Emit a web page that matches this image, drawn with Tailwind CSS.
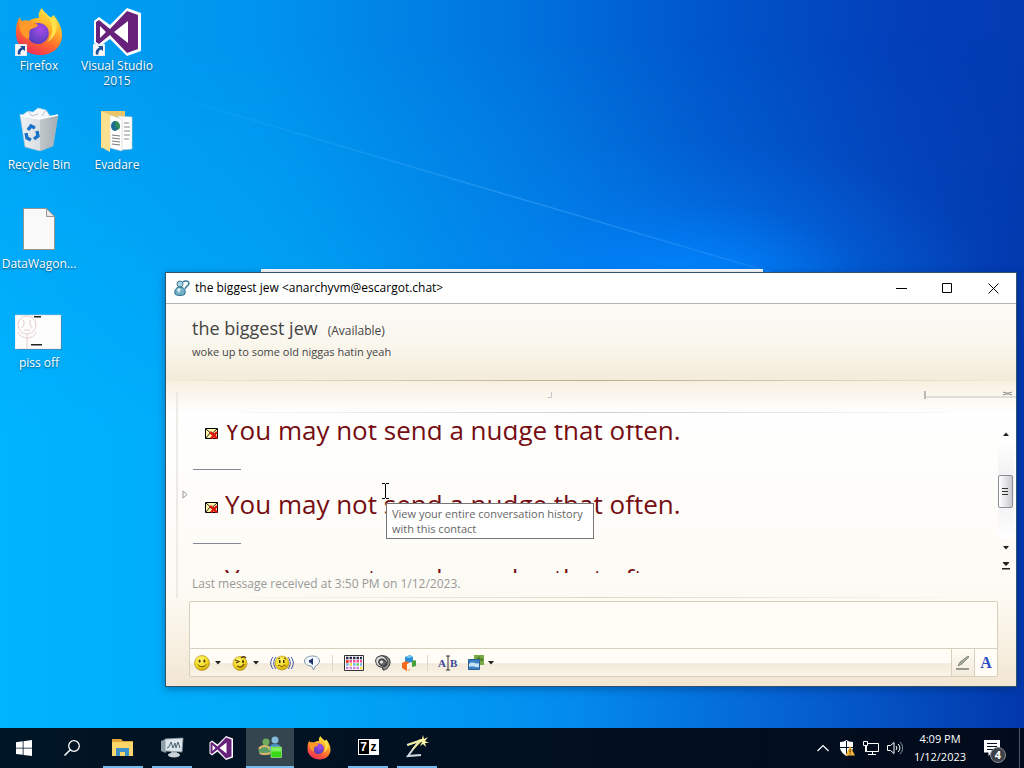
<!DOCTYPE html>
<html lang="en">
<head>
    <meta charset="UTF-8">
    <meta name="viewport" content="width=device-width, initial-scale=1.0">
    <script src="https://cdn.jsdelivr.net/npm/@tailwindcss/browser@4"></script>
    <title>Desktop</title>
</head>
<body class="h-screen overflow-hidden flex flex-col text-xs font-['Open_Sans','Noto_Sans',sans-serif]">

    <!-- Shared symbols -->
    <svg class="absolute size-0" aria-hidden="true">
        <defs>
            <linearGradient id="ff-body" x1=".8" y1="0" x2=".3" y2="1">
                <stop offset="0" stop-color="#fff04a"/>
                <stop offset=".35" stop-color="#ffb52b"/>
                <stop offset=".65" stop-color="#ff6a2c"/>
                <stop offset="1" stop-color="#f0295c"/>
            </linearGradient>
            <radialGradient id="ff-globe" cx=".6" cy=".3" r=".8">
                <stop offset="0" stop-color="#a64be8"/>
                <stop offset="1" stop-color="#4c3bb5"/>
            </radialGradient>
            <radialGradient id="smile" cx=".4" cy=".3" r=".8">
                <stop offset="0" stop-color="#fff873"/>
                <stop offset=".6" stop-color="#f2d51c"/>
                <stop offset="1" stop-color="#b98d0a"/>
            </radialGradient>
            <linearGradient id="bin" x1="0" x2="1">
                <stop offset="0" stop-color="#eef1f3"/>
                <stop offset=".55" stop-color="#d9dee2"/>
                <stop offset="1" stop-color="#a9b2b9"/>
            </linearGradient>
            <symbol id="firefox" viewBox="0 0 48 48">
                <path fill="url(#ff-body)" d="M2 15c1-3 2-5 3-6 0 2 1 3 2 4 2-1 5-1 7 0 4-3 7-3 10-3-1-4 0-7 3-10 1 4 5 5 7 9 2 0 4 0 4-2 5 5 9 12 9 20 0 12-9 20-22 20S1 38 1 26c0-4 0-8 1-11z"/>
                <path fill="url(#ff-globe)" d="M16 18c4-5 14-4 17 3 3 8-3 15-10 15-6 0-10-4-10-10 0-3 1-6 3-8z"/>
                <path fill="#ff9a2a" d="M5 12c3 2 6 1 9 2 2 1 6 1 9 3-1 3-6 3-8 5-2 3 1 7-2 9-7-3-10-11-8-19z"/>
                <path fill="#ffe24a" d="M27 1c1 4 6 6 8 11 4 8 2 17-3 22 9-5 13-15 7-27l-2 4c-3-4-8-5-10-10z"/>
            </symbol>
            <symbol id="vs" viewBox="0 0 48 48">
                <path fill="#fff" d="M1 13 6 9l11 8L34 0l14 5v38l-14 5-17-17-11 8-5-4z"/>
                <path fill="#68217a" fill-rule="evenodd" d="m3 14 3-2 11 9L34 3l11 4v34l-11 4-17-18-11 9-3-2zm4 4v12l6-6zm14 6 14 11V13z"/>
            </symbol>
            <symbol id="shortcut" viewBox="0 0 12 12">
                <path fill="#f7f7f7" stroke="#b9c4cc" stroke-width=".5" d="M0 0h12v12H0z"/>
                <path fill="#1f4f99" d="M5 2h5v5L8 5.500C6 6.500 5 8 5.500 10.500H3C2 7 4 4.500 6.500 3.800z"/>
            </symbol>
            <symbol id="smiley" viewBox="0 0 16 16">
                <circle cx="8" cy="8" r="7.500" fill="url(#smile)" stroke="#b08b14" stroke-width=".6"/>
                <ellipse cx="5.600" cy="6" rx="1" ry="1.600" fill="#3b2f05"/>
                <ellipse cx="10.400" cy="6" rx="1" ry="1.600" fill="#3b2f05"/>
                <path d="M4 9.500c1.500 3 6.500 3 8 0" fill="none" stroke="#5c4508"/>
            </symbol>
            <symbol id="caret" viewBox="0 0 6 4"><path fill="#222" d="M0 0h6L3 3.500z"/></symbol>
            <symbol id="mail-x" viewBox="0 0 13 11">
                <path fill="#fff7a8" stroke="#000" d="M.5.500h12v10H.5z"/>
                <path d="m1 1 5.500 5L12 1M1 10l4-5M12 10 8 5" fill="none" stroke="#222"/>
                <path d="m5 4 7 6.500M12 4 6 10.500" stroke="#e3150f" stroke-width="2.400"/>
            </symbol>
        </defs>
    </svg>

    <main class="relative flex-1 min-h-0 overflow-hidden bg-[#00a8f8]">
        <!-- Wallpaper -->
        <svg class="absolute inset-0 size-full" viewBox="0 0 1024 728" preserveAspectRatio="none" aria-hidden="true">
            <defs>
                <linearGradient id="sky" x1="0" x2="1">
                    <stop offset="0" stop-color="#00a2f4"/>
                    <stop offset=".25" stop-color="#0094ee"/>
                    <stop offset=".5" stop-color="#0074de"/>
                    <stop offset=".7" stop-color="#0054ca"/>
                    <stop offset=".88" stop-color="#033fb9"/>
                    <stop offset="1" stop-color="#033bb2"/>
                </linearGradient>
                <linearGradient id="floor" x1="0" x2="1">
                    <stop offset="0" stop-color="#00b4ff"/>
                    <stop offset=".3" stop-color="#00a8f8"/>
                    <stop offset=".55" stop-color="#038cee"/>
                    <stop offset=".78" stop-color="#0560d0"/>
                    <stop offset="1" stop-color="#0238ac"/>
                </linearGradient>
                <linearGradient id="fade" x1="0" x2="0" y1="0" y2="1">
                    <stop offset=".05" stop-color="#000"/>
                    <stop offset=".6" stop-color="#fff"/>
                </linearGradient>
                <mask id="low"><path fill="url(#fade)" d="M0 0h1024v728H0z"/></mask>
                <radialGradient id="glow">
                    <stop offset="0" stop-color="#0088ff"/>
                    <stop offset=".25" stop-color="#0084ff" stop-opacity=".7"/>
                    <stop offset=".6" stop-color="#0080ff" stop-opacity=".2"/>
                    <stop offset="1" stop-color="#0080ff" stop-opacity="0"/>
                </radialGradient>
                <linearGradient id="ray" x1="0" x2="1">
                    <stop offset="0" stop-color="#5cc4ff" stop-opacity="0"/>
                    <stop offset=".6" stop-color="#4fb2ff" stop-opacity=".4"/>
                    <stop offset="1" stop-color="#3c9cff" stop-opacity=".3"/>
                </linearGradient>
            </defs>
            <path fill="url(#sky)" d="M0 0h1024v728H0z"/>
            <path fill="url(#floor)" mask="url(#low)" d="M0 0h1024v728H0z"/>
            <ellipse cx="690" cy="290" rx="300" ry="150" fill="url(#glow)"/>
            <path d="M150 90 770 272" stroke="url(#ray)" stroke-width="1.500"/>
        </svg>

        <!-- Desktop icons -->
        <div class="absolute top-2 left-0 grid grid-flow-col grid-rows-[repeat(4,99px)] auto-cols-[78px] text-white text-center leading-[15px] [text-shadow:0_1px_2px_#0008]">
            <a href="#" class="flex flex-col items-center gap-[2px]">
                <span class="relative">
                    <svg class="size-12"><use href="#firefox"/></svg>
                    <svg class="absolute left-0 bottom-0 size-3"><use href="#shortcut"/></svg>
                </span>
                Firefox
            </a>
            <a href="#" class="flex flex-col items-center gap-[2px]">
                <svg class="size-12" viewBox="0 0 48 48" aria-hidden="true">
                    <path fill="#f4f8fa" stroke="#c3ccd2" stroke-width=".5" d="m6 9 7-5 5 1 5-4 8 2 4 6 3 1-14 5z"/>
                    <path d="m13 4 4 5 6-2m8-4-4 6" fill="none" stroke="#b9c4cb"/>
                    <path fill="url(#bin)" stroke="#b7c0c6" stroke-width=".6" d="m5 8 19 4 19-4-5 31-13 5-15-4z"/>
                    <path fill="#9aa4ab" fill-opacity=".4" d="m25 12 18-4-5 31-13 5z"/>
                    <path d="m5 8 19 4 19-4" fill="none" stroke="#fff" stroke-width="1.500"/>
                    <g fill="none" stroke="#1a73c7" stroke-width="3.400">
                        <path d="m13 23 3-4 4 2"/>
                        <path d="m22 24 1 5-4 3"/>
                        <path d="m11 26 1 5 4 2"/>
                    </g>
                </svg>
                <span class="whitespace-nowrap">Recycle Bin</span>
            </a>
            <a href="#" class="flex flex-col items-center gap-[2px]">
                <svg class="size-12" viewBox="0 0 48 48" aria-hidden="true">
                    <path fill="#f9f9f9" stroke="#99958f" d="M8.500 2.500h23l8 8v33h-31z"/>
                    <path fill="#e8e8e8" stroke="#99958f" d="M31.500 2.500v8h8z"/>
                </svg>
                <span class="whitespace-nowrap">DataWagon...</span>
            </a>
            <a href="#" class="flex flex-col items-center gap-[2px]">
                <svg class="size-12" viewBox="0 0 48 48" aria-hidden="true">
                    <path fill="#0a4f80" fill-opacity=".5" d="M2 11h45v34H2z"/>
                    <path fill="#fdfdfd" stroke="#c9c9c9" stroke-width=".5" d="M0 10h46v34H0z"/>
                    <g fill="none" stroke="#dfc2be" stroke-width=".8">
                        <circle cx="12" cy="20" r="9"/>
                        <path d="M12 29v15M3 27c3 8 15 8 18 0M8 15c2 3 1 5-1 8M15 15c-1 4 1 5 2 8M9 25h6"/>
                    </g>
                    <path fill="#222" d="M19 11h7v1.500h-7zM16 39h11v1.500H16z"/>
                </svg>
                <span class="whitespace-nowrap">piss off</span>
            </a>
            <a href="#" class="flex flex-col items-center gap-[2px]">
                <span class="relative">
                    <svg class="size-12"><use href="#vs"/></svg>
                    <svg class="absolute left-0 bottom-0 size-3"><use href="#shortcut"/></svg>
                </span>
                <span>Visual Studio 2015</span>
            </a>
            <a href="#" class="flex flex-col items-center gap-[2px]">
                <svg class="size-12" viewBox="0 0 48 48" aria-hidden="true">
                    <path fill="#e9c667" d="M8 4h24v37H8z"/>
                    <path fill="#fff" stroke="#cfcfcf" stroke-width=".6" d="m25 9 14 1v32l-12 1z"/>
                    <path d="M31 16h5M31 20h6M31 24h6M31 28h6M31 32h5" stroke="#8a8a8a"/>
                    <path fill="#fff" stroke="#cfcfcf" stroke-width=".6" d="m17 8 12 4v32l-12-3z"/>
                    <ellipse cx="22" cy="19" rx="4" ry="5" fill="#1d6d92"/>
                    <path fill="#2f8a5c" d="M22 19v-5a5 5 0 0 1 3 9z"/>
                    <path d="m19 28 8 1M19 31l8 1M19 34l8 1M19 37l8 1" stroke="#777"/>
                    <path fill="#fbe08f" d="m8 4 9 4v37l-9-5z"/>
                </svg>
                Evadare
            </a>
        </div>

        <!-- Edge of the window behind -->
        <div class="absolute left-[261px] top-[269px] w-[502px] h-20 bg-white"></div>

        <!-- Conversation window -->
        <section class="absolute left-[165px] right-[7px] top-[272px] flex flex-col border border-[#31536e] bg-[#fdfbf3] shadow-[0_2px_8px_#00205066]">
            <header class="flex items-center h-[31px] pl-2 bg-white border-b border-[#b5b5b5] text-black">
                <svg class="size-4" viewBox="0 0 16 16" aria-hidden="true">
                    <circle cx="6" cy="4" r="3" fill="#a8d4e4" stroke="#3c7d99"/>
                    <path fill="#71b0c8" stroke="#2f6f8c" d="M1 14c-1-5 2-7 5-7s6 2 5 7c-2 2-8 2-10 0z"/>
                    <path fill="#d7eef5" d="M3 10c1-2 3-2 4-1L5 13z"/>
                    <path d="M9 2c2-2 6-1 6 1 0 3-3 3-4 6" fill="none" stroke="#3c7d99" stroke-width="1.500"/>
                </svg>
                <h1 class="flex-1 pl-[5px]">the biggest jew &lt;anarchyvm@escargot.chat&gt;</h1>
                <button class="w-[46px] h-full grid place-items-center" aria-label="Minimize">
                    <svg class="w-[11px] h-[11px]" viewBox="0 0 11 11"><path d="M0 5.500h11" stroke="#000"/></svg>
                </button>
                <button class="w-[46px] h-full grid place-items-center" aria-label="Maximize">
                    <svg class="w-[11px] h-[11px]" viewBox="0 0 11 11"><path d="M.5.500h9v9h-9z" fill="none" stroke="#000"/></svg>
                </button>
                <button class="w-[46px] h-full grid place-items-center" aria-label="Close">
                    <svg class="w-[11px] h-[11px]" viewBox="0 0 11 11"><path d="m.5.500 10 10m0-10-10 10" stroke="#000"/></svg>
                </button>
            </header>

            <!-- Contact -->
            <div class="h-[76px] pl-[26px] pt-[11px] bg-linear-to-b from-[#fbfaf6] via-[#faf7ee] to-[#f3ecd9] text-[#444]">
                <p class="flex items-baseline gap-[10px] leading-[26px]">
                    <span class="text-lg leading-[26px]">the biggest jew</span>
                    <span>(Available)</span>
                </p>
                <p class="text-[11px] leading-4">woke up to some old niggas hatin yeah</p>
            </div>
            <div class="h-px bg-linear-to-r from-[#f3ecd9] via-[#b9ad92] to-[#f3ecd9]"></div>

            <div class="flex flex-col bg-linear-to-b from-[#f8f0e0] from-0% via-white via-15% to-[#fcfaf3]">
                <!-- Collapsed banner strip -->
                <div class="flex items-center justify-end gap-[371px] h-[31px] pb-[3px]">
                    <svg class="size-2" viewBox="0 0 8 8" aria-hidden="true"><path d="M6.500 1v5.500h-4" fill="none" stroke="#c6c6c6"/></svg>
                    <svg class="w-[92px] h-3" viewBox="0 0 92 12" preserveAspectRatio="none" aria-hidden="true">
                        <path fill="#b8b8b8" d="M0 2h2v8H0z"/>
                        <path fill="#deded9" d="M2 7h90v2H2z"/>
                        <path d="m79 3 3 1h3l3-1m-9 3 3-1h3l3 1" fill="none" stroke="#888"/>
                    </svg>
                </div>

                <div class="flex">
                    <button class="w-[14px] ml-[10px] -mt-5 pl-1 shrink-0 border-l-2 border-[#edebe6]" aria-label="Show contact pane">
                        <svg class="w-[7px] h-[10px]" viewBox="0 0 7 10"><path d="M1 1v7l4-3.500z" fill="#fff" stroke="#999"/></svg>
                    </button>
                    <div class="flex-1 min-w-0 flex flex-col">
                        <div class="h-px bg-linear-to-r from-white via-[#cfcfcf] to-white"></div>
                        <div class="h-[148px] mt-3 pl-[3px] overflow-hidden text-[#750d12]">
                            <ul class="-mt-[29px]">
                                <li class="h-[74px] flex flex-col">
                                    <p class="flex-1 flex items-center gap-[7px] pl-3 pb-[6px] text-[26px] leading-[36px]"><svg class="w-[13px] h-[11px] mt-2"><use href="#mail-x"/></svg>You may not send a nudge that often.</p>
                                    <hr class="w-12 border-[#83839a]">
                                </li>
                                <li class="h-[74px] flex flex-col">
                                    <p class="flex-1 flex items-center gap-[7px] pl-3 pb-[6px] text-[26px] leading-[36px]"><svg class="w-[13px] h-[11px] mt-2"><use href="#mail-x"/></svg>You may not send a nudge that often.</p>
                                    <hr class="w-12 border-[#83839a]">
                                </li>
                                <li class="h-[74px] flex flex-col">
                                    <p class="flex-1 flex items-center gap-[7px] pl-3 pb-[6px] text-[26px] leading-[36px]"><svg class="w-[13px] h-[11px] mt-2"><use href="#mail-x"/></svg>You may not send a nudge that often.</p>
                                    <hr class="w-12 border-[#83839a]">
                                </li>
                            </ul>
                        </div>
                        <p class="h-6 pt-[3px] pl-[2px] text-[#999] leading-4">Last message received at 3:50 PM on 1/12/2023.</p>
                        <div class="h-px bg-linear-to-r from-[#fdfbf4] via-[#ddd8c9] to-[#fdfbf4]"></div>
                    </div>

                    <!-- Scroll bar -->
                    <div class="w-[19px] shrink-0 flex flex-col items-center pt-4 pr-px">
                        <button class="h-3 w-full grid place-items-center" aria-label="Scroll up"><svg class="w-[6px] h-1 rotate-180"><use href="#caret"/></svg></button>
                        <div class="h-[98px] w-4 pt-[35px] bg-linear-to-b from-white via-[#ededed] to-white">
                            <div class="h-[33px] w-[15px] grid place-items-center rounded-xs border border-[#8d8d95] bg-linear-to-r from-white to-[#cbc8cf]">
                                <svg class="w-[7px] h-[9px]" viewBox="0 0 7 9"><path d="M0 1.500h6M0 4.500h6M0 7.500h6" stroke="#333"/></svg>
                            </div>
                        </div>
                        <button class="h-5 w-full grid place-items-center" aria-label="Scroll down"><svg class="w-[6px] h-1"><use href="#caret"/></svg></button>
                        <button class="h-4 w-full grid place-items-center" aria-label="Scroll to end"><svg class="w-2 h-2" viewBox="0 0 8 8"><path fill="#222" d="M1 0h6v1L4 4 1 1zM0 6h8v1.500H0z"/></svg></button>
                    </div>
                </div>
            </div>

            <!-- Message box -->
            <div class="pt-[3px] pr-[18px] pb-[9px] pl-[23px] bg-linear-to-b from-[#fdfaf2] to-[#f2e6d2]">
                <div class="rounded-xs border border-[#d8d0be] bg-[#fffdf6]">
                    <textarea class="block w-full h-[46px] px-2 py-1 resize-none outline-none" aria-label="Message"></textarea>
                    <div class="flex h-7 border-t border-[#d8d0be]">
                        <div class="flex-1 flex items-center gap-[10px] pl-1 bg-linear-to-b from-[#fffdf6] from-50% via-[#f3ead9] via-55% to-[#faf5e8]">
                            <button class="w-7 flex items-center gap-[5px]" aria-label="Emoticons"><svg class="size-4"><use href="#smiley"/></svg><svg class="w-[6px] h-1"><use href="#caret"/></svg></button>
                            <button class="w-7 flex items-center gap-[5px]" aria-label="Winks">
                                <svg class="size-4" viewBox="0 0 16 16">
                                    <circle cx="8" cy="8.500" r="7" fill="url(#smile)" stroke="#b08b14" stroke-width=".6"/>
                                    <path d="m3 5 4 1.500L4 8M5 11c3 2 6 1 7-2M9 3c2-2 4-1 5 0" fill="none" stroke="#5c3b08" stroke-width="1.200"/>
                                    <ellipse cx="11" cy="6.500" rx="1" ry="1.500" fill="#3b2f05"/>
                                </svg>
                                <svg class="w-[6px] h-1"><use href="#caret"/></svg>
                            </button>
                            <button class="w-6" aria-label="Nudge">
                                <svg class="w-6 h-4" viewBox="0 0 24 16">
                                    <path d="M3 2C0 6 0 10 3 14M6 2C3 6 3 10 6 14M21 2c3 4 3 8 0 12M18 2c3 4 3 8 0 12" fill="none" stroke="#3c4fa0"/>
                                    <circle cx="12" cy="8" r="7" fill="url(#smile)" stroke="#b08b14" stroke-width=".6"/>
                                    <path d="M8 11c2-2 3 2 5 0s2 0 3 0M8 4l2-1m4 0 2 1" fill="none" stroke="#5c3b08"/>
                                    <path fill="#3b2f05" d="M9 5h1.500v3H9zM13 5h1.500v3H13z"/>
                                </svg>
                            </button>
                            <button class="w-[18px]" aria-label="Voice clip">
                                <svg class="w-[17px] h-4" viewBox="0 0 17 16">
                                    <path fill="#f4f8ff" stroke="#8196a8" d="M8.500 1c4 0 7 2 7 5 0 2-2 4-4 5l-2 4-2-4c-4 0-7-2-7-5s4-5 8-5z"/>
                                    <path fill="#22336e" d="M5 5h1l3-2v7L6 7.500H5z"/>
                                </svg>
                            </button>
                            <span class="w-px h-4 bg-[#ddd5c6]"></span>
                            <button class="w-[22px] grid place-items-center" aria-label="Colors">
                                <svg class="w-5 h-4" viewBox="0 0 20 16">
                                    <path fill="#fff" stroke="#333" d="M.5.500h19v15H.5z"/>
                                    <g stroke-width="2.500" stroke-dasharray="2.500 1">
                                        <path d="M2 3h16" stroke="#2a2a50"/>
                                        <path d="M2 6.300h16" stroke="#ef4b8c"/>
                                        <path d="M2 9.600h16" stroke="#68b5f4"/>
                                        <path d="M2 13h16" stroke="#c884dc"/>
                                    </g>
                                    <path fill="#f13c2c" d="M2 5h2.500v3H2z"/><path fill="#7bdc55" d="M12.500 8.300H15v2.500h-2.500z"/><path fill="#f8e549" d="M16 11.700h2.500v2.500H16zM5.500 8.300H8v2.500H5.500z"/>
                                </svg>
                            </button>
                            <button class="w-4" aria-label="Sound">
                                <svg class="size-4" viewBox="0 0 16 16">
                                    <path fill="#8d8d8d" stroke="#333" d="M5 1c5-1 10 1 10 6 0 4-3 8-7 8z"/>
                                    <ellipse cx="6.500" cy="6.500" rx="6" ry="5.500" fill="#ddd" stroke="#444" transform="rotate(35 6.500 6.500)"/>
                                    <ellipse cx="7.500" cy="7.500" rx="4" ry="3.200" fill="#666" stroke="#222" transform="rotate(35 7.500 7.500)"/>
                                    <circle cx="6.500" cy="7" r="1.600" fill="#e8e8e8"/>
                                </svg>
                            </button>
                            <button class="w-4" aria-label="Activities">
                                <svg class="size-4" viewBox="0 0 16 16">
                                    <path fill="#2a8fd6" d="m4 2 5-2 3 2v5L8 8 4 7z"/><path fill="#75c8f4" d="m4 2 5-2 3 2-4 1z"/>
                                    <path fill="#48a33b" d="m11 6 3-1 1 1v5l-4 1z"/>
                                    <path fill="#f26b21" d="m1 8 4-2 4 2v7l-3 1-5-3z"/><path fill="#fff3e8" d="m6 9 4-2v6l-4 3z"/>
                                </svg>
                            </button>
                            <span class="w-px h-4 bg-[#ddd5c6]"></span>
                            <button class="w-5 text-[#39499a] font-bold text-[11px] leading-4 font-['Liberation_Serif',serif] flex items-center" aria-label="Text size">A<svg class="w-1 h-4" viewBox="0 0 4 16"><path d="M0 1h4M2 1v14M0 15h4" stroke="#333"/></svg>B</button>
                            <button class="flex items-center gap-1" aria-label="Background">
                                <svg class="size-4" viewBox="0 0 16 16">
                                    <path fill="#77a945" d="M6 0h10v10H6z"/><path fill="#507d2b" d="m8 5 3-4 2 3 2-1v3z"/>
                                    <path fill="#3a83c4" stroke="#2d5f91" d="M.5 4.500h11v10H.5z"/><path fill="#c7e4f2" d="M1 9c4-4 7 1 10-1v4c-3 1-6-2-10 0z"/>
                                </svg>
                                <svg class="w-[6px] h-1"><use href="#caret"/></svg>
                            </button>
                        </div>
                        <button class="w-6 grid place-items-center border-x border-[#d8d0be] bg-linear-to-b from-[#fffdf6] to-[#f3ead9]" aria-label="Handwriting">
                            <svg class="size-4" viewBox="0 0 16 16"><path fill="#a4a99a" stroke="#70746a" stroke-width=".7" d="m3 11 2-4 8-6 1 1-7 7z"/><path d="M1 14h13" stroke="#777c70" stroke-width="1.500"/></svg>
                        </button>
                        <button class="w-[22px] text-[#2c4bc4] font-bold text-base leading-7 font-['Liberation_Serif',serif]" aria-label="Typing">A</button>
                    </div>
                </div>
            </div>
        </section>

        <!-- Tooltip and text cursor -->
        <div role="tooltip" class="absolute left-[386px] top-[503px] w-[208px] px-[5px] py-[2px] border border-[#767676] bg-white text-[11px] text-[#666] leading-[15px] whitespace-nowrap">
            View your entire conversation history<br>with this contact
        </div>
        <svg class="absolute left-[382px] top-[483px] w-[7px] h-4" viewBox="0 0 7 16" aria-hidden="true"><path d="M0 .500h3m1 0h3M3.500 1v14M0 15.500h3m1 0h3" stroke="#000"/></svg>
    </main>

    <!-- Taskbar -->
    <nav class="h-10 shrink-0 flex bg-linear-to-r from-[#001525] to-[#020b1c] text-white">
        <button class="w-12 grid place-items-center" aria-label="Start">
            <svg class="size-4" viewBox="0 0 16 16"><path fill="#fff" d="m0 2.300 6.700-1v6.400H0zM7.500 1.200 16 0v7.700H7.500zM0 8.400h6.700v6.400L0 13.900zM7.500 8.400H16V16l-8.500-1.100z"/></svg>
        </button>
        <button class="w-12 grid place-items-center" aria-label="Search">
            <svg class="size-4" viewBox="0 0 16 16"><circle cx="10" cy="6" r="5.300" fill="none" stroke="#fff" stroke-width="1.300"/><path d="M6.300 9.700.500 15.500" stroke="#fff" stroke-width="1.500"/></svg>
        </button>
        <div class="flex gap-px pl-[3px]">
            <button class="w-12 flex flex-col items-center" aria-label="File Explorer">
                <svg class="size-6 my-[7px]" viewBox="0 0 24 24">
                    <path fill="#e2a336" d="M1 4h9l2 2h10v4H1z"/><path fill="#fcd668" d="M1 7h21v14H1z"/>
                    <path fill="#3d91c9" d="M5 13h13v8h-4v-4H9v4H5z"/>
                </svg>
                <span class="w-10 h-[2px] bg-[#76b9ed]"></span>
            </button>
            <button class="w-12 flex flex-col items-center" aria-label="Performance">
                <svg class="size-6 my-[7px]" viewBox="0 0 24 24">
                    <path fill="#8ea0ac" d="m1 6 5-2v14l-5-2z"/>
                    <path fill="#dce5ea" stroke="#8798a3" stroke-width=".8" d="m5 4 18-1-1 14-17-1z"/>
                    <path d="m7 13 2-1 2-5 2 6 2-5 1 5 2-6 2 6" fill="none" stroke="#4b6574"/>
                    <path fill="#9ba8b0" d="M11 16h6v4h-6z"/><ellipse cx="14" cy="20" rx="6" ry="2.500" fill="#cbd3d8"/>
                </svg>
                <span class="w-10 h-[2px] bg-[#76b9ed]"></span>
            </button>
            <button class="w-12 flex flex-col items-center" aria-label="Visual Studio 2015"><svg class="size-6 my-[8px]"><use href="#vs"/></svg></button>
            <button class="w-12 flex flex-col items-center bg-[#35454f]" aria-label="Messenger">
                <svg class="size-6 my-[7px]" viewBox="0 0 24 24">
                    <circle cx="8" cy="7" r="3.500" fill="#6fac60"/><path fill="#5a9c68" d="M1 18c-2-5 3-8 7-8s7 3 6 8c-2 3-11 3-13 0z"/>
                    <path d="M1 14c3-4 9-4 12 1M2 18c3 2 7 1 10 0" fill="none" stroke="#e0b56c" stroke-width="2"/>
                    <circle cx="17" cy="5" r="3.500" fill="#86bbdc"/><path fill="#4a8cbd" d="M12 11c1-3 9-3 10 0v4H12z"/>
                    <path fill="#35d916" stroke="#b6f59c" stroke-width=".6" d="M13 12h10.500v10.500H13z"/><path fill="#80f05e" d="M13.500 12.500h9.500v4h-9.500z"/>
                </svg>
                <span class="w-full h-[2px] bg-[#76b9ed]"></span>
            </button>
            <button class="w-12 flex flex-col items-center" aria-label="Firefox"><svg class="size-6 my-[8px]"><use href="#firefox"/></svg></button>
            <button class="w-12 flex flex-col items-center" aria-label="7-Zip">
                <span class="my-[11px] w-[21px] h-4 flex items-center gap-px p-px bg-white text-xs leading-[14px] font-bold font-['Liberation_Sans',sans-serif]">
                    <span class="w-[10px] bg-black text-white">7</span><span class="w-2 text-black">z</span>
                </span>
                <span class="w-10 h-[2px] bg-[#76b9ed]"></span>
            </button>
            <button class="w-12 flex flex-col items-center" aria-label="Zap">
                <svg class="size-6 my-[7px]" viewBox="0 0 24 24">
                    <path d="m2 10 12-4L3 21l13-1" fill="none" stroke="#d5dae0" stroke-width="2"/>
                    <path d="m3 10 14-5L8 14" fill="none" stroke="#f6ec8a" stroke-width="1.500"/>
                    <path fill="#fff9a8" d="m18 0 1 4 4-2-3 4 4 2h-4l1 4-3-3-3 2 2-4-4-2 4-1z"/>
                </svg>
                <span class="w-10 h-[2px] bg-[#76b9ed]"></span>
            </button>
        </div>

        <!-- Tray -->
        <div class="ml-auto flex items-center">
            <button class="w-6 grid place-items-center" aria-label="Show hidden icons"><svg class="w-3 h-2" viewBox="0 0 12 8"><path d="m.5 7 5.500-5.500L11.500 7" fill="none" stroke="#fff" stroke-width="1.200"/></svg></button>
            <button class="w-6 grid place-items-center" aria-label="Security">
                <svg class="size-4" viewBox="0 0 16 16">
                    <path fill="#fff" d="M7.500 0C9 1 11 2 14 2v5c0 4-3 7-6.500 9C4 14 1 11 1 7V2c3 0 5-1 6.500-2z"/>
                    <path d="M7.500 1v14M1 7.500h13" stroke="#001525"/>
                    <path fill="#f6b73c" d="m11 6 5 9.500H6.500z"/><path fill="#4a3000" d="M10.600 9h1v3.500h-1zm0 4.200h1v1h-1z"/>
                </svg>
            </button>
            <button class="w-6 grid place-items-center" aria-label="Network">
                <svg class="size-4" viewBox="0 0 16 16"><path d="M4 3.500h11.500v8H3.500V6M9.500 11.500v3M5 14.500h8M.5 1.500h4v4h-4zM2.500 5v7" fill="none" stroke="#fff"/></svg>
            </button>
            <button class="w-6 grid place-items-center" aria-label="Volume">
                <svg class="size-4" viewBox="0 0 16 16"><path d="M.5 5.500h3L7 2.500v11l-3.500-3h-3zM9 6c1 1 1 3 0 4" fill="none" stroke="#fff"/><path d="M11 4c2.500 2.500 2.500 5.500 0 8" fill="none" stroke="#fff"/><path d="M13 2c3.500 3.500 3.500 8.500 0 12" fill="none" stroke="#8a98a2"/></svg>
            </button>
            <time class="w-[66px] text-center text-[11px] leading-[18px] whitespace-nowrap" datetime="2023-01-12T16:09">4:09 PM<br>1/12/2023</time>
            <button class="relative w-[47px] h-full flex items-center justify-center pr-2 border-r border-[#4c5863]" aria-label="Notifications">
                <svg class="size-4" viewBox="0 0 16 16"><path fill="#fff" d="M0 0h16v12.500h-8L4.500 16v-3.500H0z"/><path d="M3 3.500h10M3 6.500h10M3 9.500h7" stroke="#04101f"/></svg>
                <span class="absolute left-[17px] top-[19px] size-4 rounded-full border border-[#8a8f95] bg-[#3c4248] leading-[14px] text-[11px] font-bold">4</span>
            </button>
            <span class="w-1"></span>
        </div>
    </nav>
</body>
</html>
